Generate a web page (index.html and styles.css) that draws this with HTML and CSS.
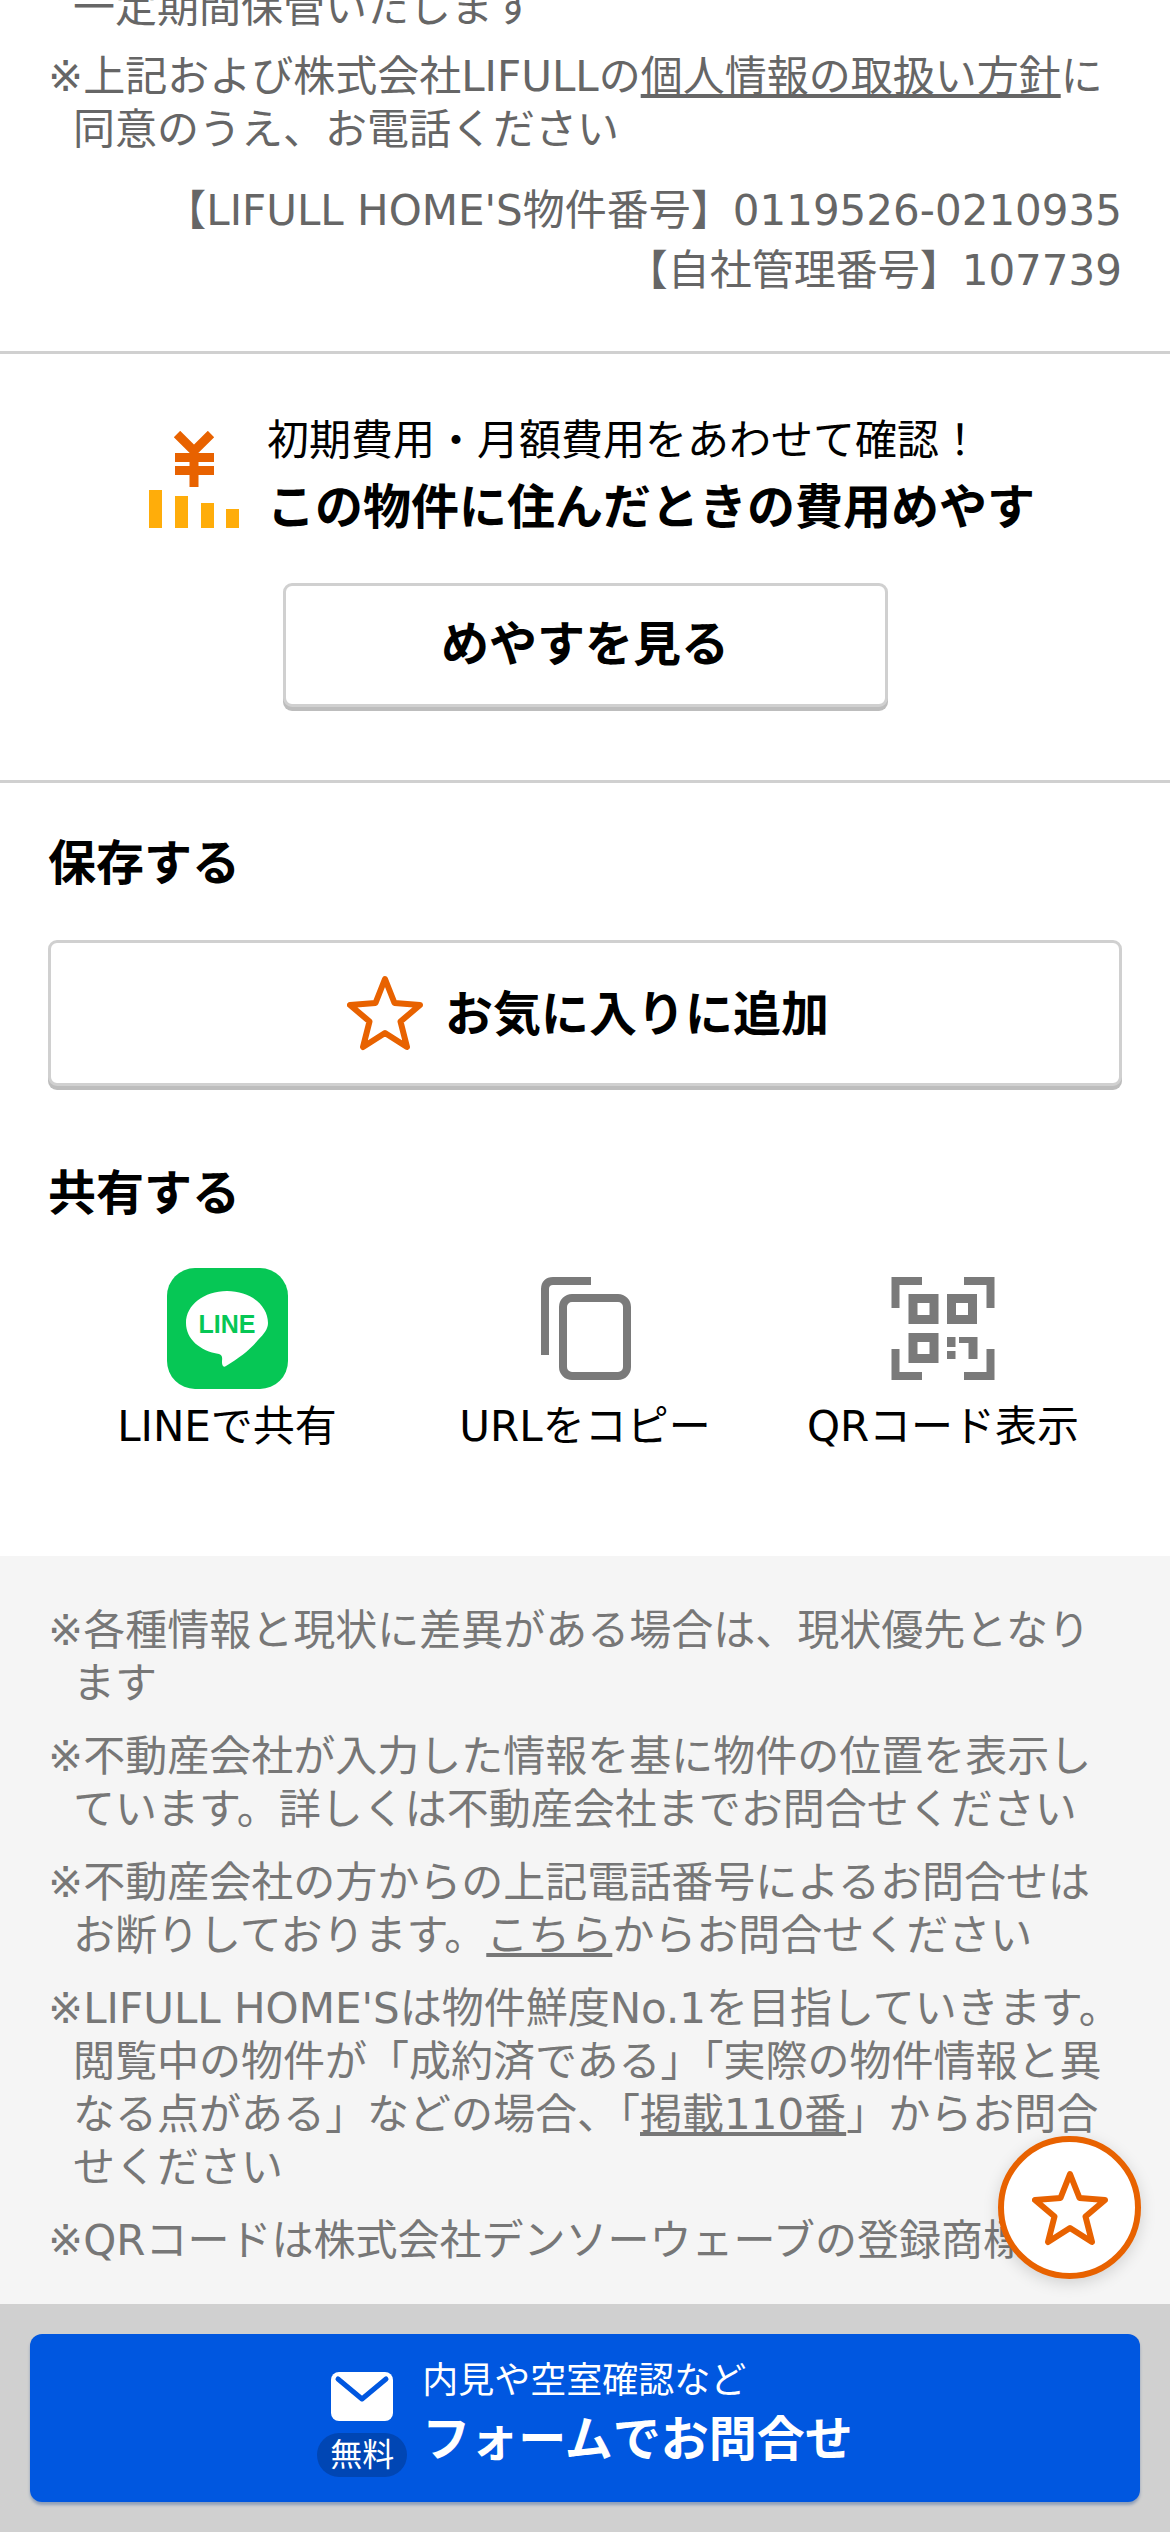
FILE: index.html
```html
<!DOCTYPE html>
<html lang="ja">
<head>
    <meta charset="UTF-8">
    <meta name="viewport" content="width=device-width, initial-scale=1.0">
    <title>LIFULL HOME'S</title>
    <link rel="stylesheet" href="styles.css">
</head>
<body>
<div class="page">
    <div class="scroll">
        <section class="contact-notes">
            <p class="note clipped">一定期間保管いたします</p>
            <p class="note policy">※上記および株式会社LIFULLの<a href="#">個人情報の取扱い方針</a>に同意のうえ、お電話ください</p>
            <p class="number first">【LIFULL HOME'S物件番号】0119526-0210935</p>
            <p class="number">【自社管理番号】107739</p>
        </section>

        <section class="cost">
            <div class="cost-head">
                <svg class="cost-icon" viewBox="0 0 90 97" width="90" height="97">
                    <path d="M28 3 45 20 62 3M45 20V56M26 26.500H65M26 39.500H65" fill="none" stroke="#e86200" stroke-width="9"/>
                    <rect x="0" y="59" width="13" height="38" fill="#ffad0a"/>
                    <rect x="26" y="65" width="13" height="32" fill="#ffad0a"/>
                    <rect x="52" y="72" width="13" height="25" fill="#ffad0a"/>
                    <rect x="77" y="78" width="13" height="19" fill="#ffad0a"/>
                </svg>
                <div>
                    <p class="cost-lead">初期費用・月額費用をあわせて確認！</p>
                    <p class="cost-title">この物件に住んだときの費用めやす</p>
                </div>
            </div>
            <button class="btn cost-btn">めやすを見る</button>
        </section>

        <section class="save">
            <h2>保存する</h2>
            <button class="btn fav-btn">
                <svg viewBox="0 0 76 76" width="76" height="76"><path class="star" d="M38 4 47.500 28 73 30 53.500 46.500 60 72 38 58 16 72 22.500 46.500 3 30 28.500 28Z"/></svg>
                お気に入りに追加
            </button>
            <h2 class="share-title">共有する</h2>
            <div class="share">
                <div class="share-item">
                    <svg viewBox="0 0 121 121" width="121" height="121">
                        <rect width="121" height="121" rx="28" fill="#06c755"/>
                        <path d="M60 23C37 23 19 37 19 55 19 71 33 83 52 86 55 87 55.500 89 55 93 54.800 97 56 100 59 98 72 90 84 81 91 72 97 66 101 61 101 55 101 37 83 23 60 23Z" fill="#fff"/>
                        <text class="line-word" x="60" y="65" text-anchor="middle">LINE</text>
                    </svg>
                    <span>LINEで共有</span>
                </div>
                <div class="share-item">
                    <svg viewBox="0 0 121 121" width="121" height="121" fill="none" stroke="#7a7a7a" stroke-width="8">
                        <path d="M66 13H28C23 13 20 16 20 21V87"/>
                        <rect x="38" y="30" width="64" height="78" rx="9"/>
                    </svg>
                    <span>URLをコピー</span>
                </div>
                <div class="share-item">
                    <svg viewBox="0 0 121 121" width="121" height="121" fill="none" stroke="#7a7a7a">
                        <path stroke-width="8" d="M39 13H12.500V40M81 13H107.500V40M39 108H12.500V81M81 108H107.500V81"/>
                        <path stroke-width="9" d="M30 30.500H51V51.500H30ZM68.500 30.500H89.500V51.500H68.500ZM30 69.500H51V90.500H30Z"/>
                        <path fill="#7a7a7a" stroke="none" d="M64 69H72.500V79H64ZM64 83H72.500V91H64ZM76 69H94.500V91H85.500V75H76Z"/>
                    </svg>
                    <span>QRコード表示</span>
                </div>
            </div>
        </section>

        <section class="notes">
            <p class="note">※各種情報と現状に差異がある場合は、現状優先となります</p>
            <p class="note">※不動産会社が入力した情報を基に物件の位置を表示しています。詳しくは不動産会社までお問合せください</p>
            <p class="note">※不動産会社の方からの上記電話番号によるお問合せはお断りしております。<a href="#">こちら</a>からお問合せください</p>
            <p class="note">※LIFULL HOME'Sは物件鮮度No.1を目指していきます。閲覧中の物件が「成約済である」「実際の物件情報と異なる点がある」などの場合、「<a href="#">掲載110番</a>」からお問合せください</p>
            <p class="note">※QRコードは株式会社デンソーウェーブの登録商標です</p>
        </section>
    </div>

    <footer class="footer">
        <a class="form-btn" href="#">
            <div class="form-icon">
                <svg viewBox="0 0 62 49" width="62" height="49">
                    <rect width="62" height="49" rx="8" fill="#fff"/>
                    <path d="M7 7 31 27 55 7" fill="none" stroke="#0057e0" stroke-width="5" stroke-linecap="round" stroke-linejoin="round"/>
                </svg>
                <span class="free">無料</span>
            </div>
            <div class="form-text">
                <span class="form-lead">内見や空室確認など</span>
                <span class="form-title">フォームでお問合せ</span>
            </div>
        </a>
    </footer>

    <button class="float-fav">
        <svg viewBox="0 0 76 76" width="76" height="76"><path class="star" d="M38 4 47.500 28 73 30 53.500 46.500 60 72 38 58 16 72 22.500 46.500 3 30 28.500 28Z"/></svg>
    </button>
</div>
</body>
</html>
```

FILE: styles.css
```css
* {
    box-sizing: border-box;
}
body {
    margin: 0;
    background: #fff;
    font-family: "DejaVu Sans", "Noto Sans CJK JP", sans-serif;
    font-size: 42px;
    color: #000;
}
p, h2 {
    margin: 0;
}
.page {
    position: relative;
    display: flex;
    flex-direction: column;
    height: 2532px;
    overflow: hidden;
}
.scroll {
    flex: 1;
    min-height: 0;
    overflow: hidden;
}
.note {
    padding-left: 25px;
    text-indent: -25px;
    line-height: 53px;
}
.note a {
    color: inherit;
}

.contact-notes {
    height: 373px;
    margin-top: -19px;
    padding: 0 48px;
    color: #666;
    border-bottom: 3px solid #d0d0d0;
}
.clipped {
    text-indent: 0;
}
.policy {
    margin-top: 16px;
}
.number {
    text-align: right;
    line-height: 60px;
}
.number.first {
    margin-top: 25px;
}

.cost {
    height: 429px;
    padding-top: 56px;
    border-bottom: 3px solid #d0d0d0;
}
.cost-head {
    display: flex;
    align-items: center;
    justify-content: center;
    gap: 28px;
    padding-left: 14px;
}
.cost-icon {
    margin-top: 6px;
}
.cost-lead {
    line-height: 62px;
}
.cost-title {
    font-size: 48px;
    font-weight: bold;
    line-height: 70px;
}
.btn {
    display: flex;
    align-items: center;
    justify-content: center;
    padding: 0 0 6px;
    background: #fff;
    border: 3px solid #d0d0d0;
    border-radius: 9px;
    box-shadow: 0 4px 0 #bdbdbd;
    font-family: inherit;
    font-size: 48px;
    font-weight: bold;
    color: #000;
}
.cost-btn {
    width: 605px;
    height: 124px;
    margin: 41px auto 0;
    padding-bottom: 11px;
}

.save {
    height: 773px;
    padding: 48px 48px 0;
}
h2 {
    font-size: 48px;
    line-height: 64px;
}
.fav-btn {
    width: 100%;
    height: 146px;
    margin-top: 45px;
    padding-left: 6px;
    gap: 22px;
}
.fav-btn svg {
    margin-top: 6px;
}
.star {
    fill: #fff;
    stroke: #e86200;
    stroke-width: 6;
    stroke-linejoin: round;
}
.share-title {
    margin-top: 75px;
}
.share {
    display: grid;
    grid-template-columns: repeat(3, 1fr);
    margin-top: 43px;
}
.share-item {
    display: flex;
    flex-direction: column;
    align-items: center;
    gap: 8px;
    line-height: 60px;
}
.line-word {
    font-family: "Liberation Sans", sans-serif;
    font-size: 25px;
    font-weight: bold;
    fill: #06c755;
}

.notes {
    height: 748px;
    padding: 48px 48px 0;
    background: #f5f5f5;
    color: #777;
}
.notes .note + .note {
    margin-top: 20px;
}

.footer {
    flex: none;
    height: 228px;
    padding: 30px 30px 0;
    background: #d0d0d0;
}
.form-btn {
    display: flex;
    align-items: center;
    justify-content: center;
    gap: 15px;
    height: 168px;
    background: #0057e0;
    border-radius: 12px;
    box-shadow: 0 3px 3px #8f9fb8;
    color: #fff;
    text-decoration: none;
}
.form-icon {
    display: flex;
    flex-direction: column;
    align-items: center;
    gap: 12px;
    padding-top: 12px;
}
.free {
    width: 90px;
    background: #0046b4;
    border-radius: 22px;
    font-size: 32px;
    line-height: 44px;
    text-align: center;
}
.form-text {
    display: flex;
    flex-direction: column;
    padding-bottom: 8px;
}
.form-lead {
    font-size: 36px;
    line-height: 50px;
}
.form-title {
    font-size: 48px;
    font-weight: bold;
    line-height: 66px;
}

.float-fav {
    position: absolute;
    left: 998px;
    top: 2136px;
    display: flex;
    align-items: center;
    justify-content: center;
    width: 143px;
    height: 143px;
    padding: 0;
    background: #fff;
    border: 6px solid #e86200;
    border-radius: 50%;
    box-shadow: 0 4px 16px rgba(0, 0, 0, 0.15);
}
```
